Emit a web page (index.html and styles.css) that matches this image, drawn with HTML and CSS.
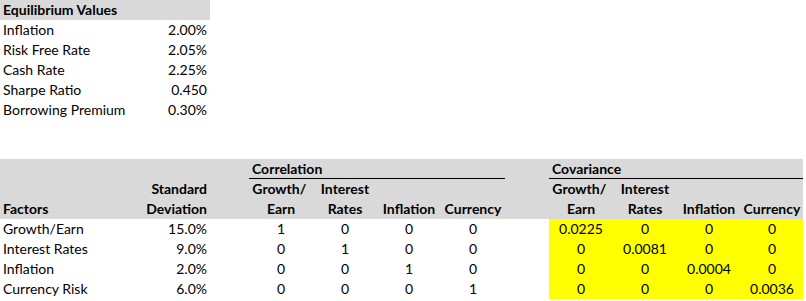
FILE: index.html
```html
<!DOCTYPE html>
<html lang="en">
<head>
<meta charset="utf-8">
<title>Equilibrium Values</title>
<link rel="stylesheet" href="styles.css">
</head>
<body>
<div class="eq">
  <div class="eq-head">Equilibrium Values</div>
  <div class="eq-row"><span class="lbl">Inflation</span><span class="num">2.00%</span></div>
  <div class="eq-row"><span class="lbl">Risk Free Rate</span><span class="num">2.05%</span></div>
  <div class="eq-row"><span class="lbl">Cash Rate</span><span class="num">2.25%</span></div>
  <div class="eq-row"><span class="lbl">Sharpe Ratio</span><span class="num">0.450</span></div>
  <div class="eq-row"><span class="lbl">Borrowing Premium</span><span class="num">0.30%</span></div>
</div>

<div class="factors">
  <div class="row head">
    <span></span><span></span><span></span>
    <span class="group">Correlation</span>
    <span></span>
    <span class="group">Covariance</span>
  </div>
  <div class="row head bold">
    <span></span><span class="num">Standard</span><span></span>
    <span class="ctr">Growth/&nbsp;</span><span class="ctr">Interest</span><span></span><span></span>
    <span></span>
    <span class="ctr">Growth/&nbsp;</span><span class="ctr">Interest</span><span></span><span></span>
  </div>
  <div class="row head bold">
    <span class="lbl">Factors</span><span class="num">Deviation</span><span></span>
    <span class="ctr">Earn</span><span class="ctr">Rates</span><span class="ctr">Inflation</span><span class="ctr">Currency</span>
    <span></span>
    <span class="ctr">Earn</span><span class="ctr">Rates</span><span class="ctr">Inflation</span><span class="ctr">Currency</span>
  </div>
  <div class="row">
    <span class="lbl">Growth/Earn</span><span class="num">15.0%</span><span></span>
    <span class="ctr">1</span><span class="ctr">0</span><span class="ctr">0</span><span class="ctr">0</span>
    <span></span>
    <span class="ctr hl">0.0225</span><span class="ctr hl">0</span><span class="ctr hl">0</span><span class="ctr hl">0</span>
  </div>
  <div class="row">
    <span class="lbl">Interest Rates</span><span class="num">9.0%</span><span></span>
    <span class="ctr">0</span><span class="ctr">1</span><span class="ctr">0</span><span class="ctr">0</span>
    <span></span>
    <span class="ctr hl">0</span><span class="ctr hl">0.0081</span><span class="ctr hl">0</span><span class="ctr hl">0</span>
  </div>
  <div class="row">
    <span class="lbl">Inflation</span><span class="num">2.0%</span><span></span>
    <span class="ctr">0</span><span class="ctr">0</span><span class="ctr">1</span><span class="ctr">0</span>
    <span></span>
    <span class="ctr hl">0</span><span class="ctr hl">0</span><span class="ctr hl">0.0004</span><span class="ctr hl">0</span>
  </div>
  <div class="row">
    <span class="lbl">Currency Risk</span><span class="num">6.0%</span><span></span>
    <span class="ctr">0</span><span class="ctr">0</span><span class="ctr">0</span><span class="ctr">1</span>
    <span></span>
    <span class="ctr hl">0</span><span class="ctr hl">0</span><span class="ctr hl">0</span><span class="ctr hl">0.0036</span>
  </div>
</div>
</body>
</html>
```

FILE: styles.css
```css
* { box-sizing: border-box; }

body {
  margin: 0;
  background: #ffffff;
  color: #000000;
  font-family: Lato, "Open Sans", sans-serif;
  font-size: 14px;
  line-height: 20px;
}

.eq {
  width: 210px;
  display: flex;
  flex-direction: column;
}

.eq-head {
  height: 20px;
  padding-left: 3px;
  background: #d9d9d9;
  font-weight: bold;
  white-space: nowrap;
}

.eq-row {
  height: 20px;
  display: grid;
  grid-template-columns: 145px 65px;
}

.lbl {
  padding-left: 3px;
  white-space: nowrap;
}

.num {
  text-align: right;
  padding-right: 3px;
  white-space: nowrap;
}

.ctr {
  text-align: center;
  white-space: nowrap;
}

.factors {
  margin-top: 39px;
  width: 803px;
  display: flex;
  flex-direction: column;
}

.row {
  height: 20px;
  display: grid;
  grid-template-columns: 145px 65px 39px 64px 64px 64px 64px 44px 64px 64px 64px 62px;
}

.row.head {
  background: #d9d9d9;
}

.bold {
  font-weight: bold;
}

.group {
  grid-column: span 4;
  padding-left: 3px;
  font-weight: bold;
  box-shadow: inset 0 -1px 0 #000000;
  white-space: nowrap;
}

.hl {
  background: #ffff00;
}
```
